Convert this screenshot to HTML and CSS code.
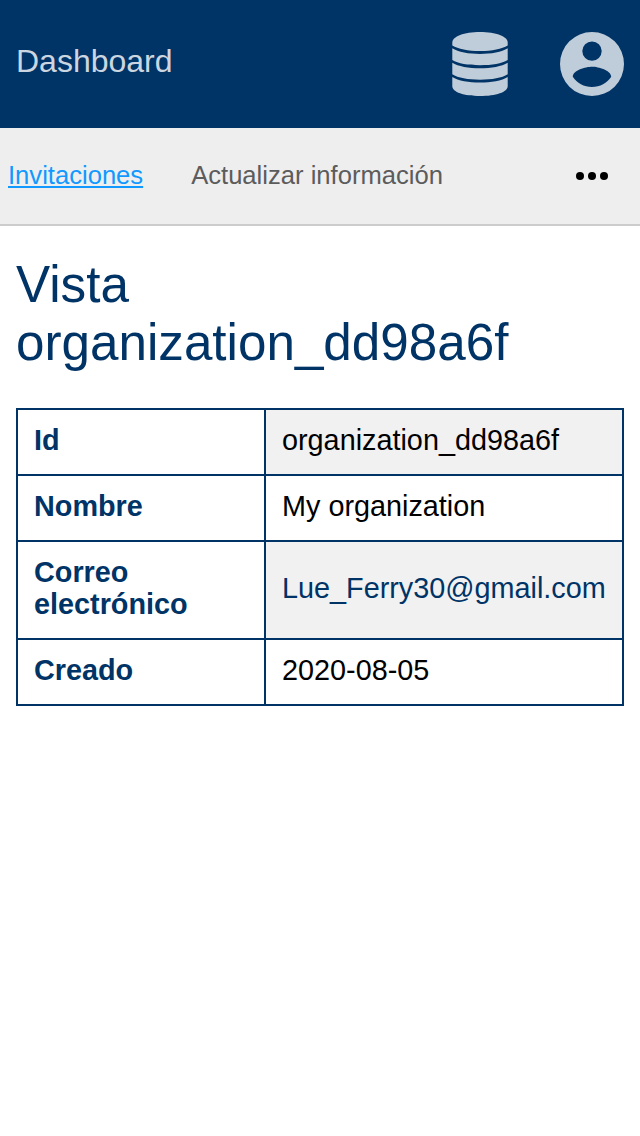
FILE: index.html
```html
<!DOCTYPE html>
<html lang="es">
<head>
<meta charset="utf-8">
<title>Dashboard</title>
<link rel="stylesheet" href="styles.css">
</head>
<body>
<header class="header">
  <span class="brand">Dashboard</span>
  <div class="actions">
    <svg class="icon-db" viewBox="0 0 56 64" width="56" height="64">
      <path d="M.3 10.500C.3 4.500 12 0 28 0s27.700 4.500 27.700 10.500v3C50 17 40 19 28 19S6 17 .3 13.500z"/>
      <path d="M.3 16.300C6 20 17 22 28 22s22-2 27.700-5.700V28C50 31.500 40 33.200 28 33.200S6 31.500 .3 28z"/>
      <path d="M.3 30.700C6 34.300 17 36.300 28 36.300s22-2 27.700-5.600v11.600C50 46 40 47.700 28 47.700S6 46 .3 42.300z"/>
      <path d="M.3 45C6 48.700 17 50.600 28 50.600s22-1.900 27.700-5.600v9.200C55.700 60 44 64 28 64S.3 60 .3 54.200z"/>
    </svg>
    <svg class="icon-user" viewBox="0 0 64 64" width="64" height="64">
      <path fill-rule="evenodd" d="M32 0a32 32 0 1 0 0 64a32 32 0 0 0 0-64zM32 9.400a9.700 9.700 0 1 1 0 19.400a9.700 9.700 0 0 1 0-19.400zM32 55c-8 0-15.100-4.100-19.200-10.300C12.900 38.300 25.600 34.800 32 34.800s19.100 3.500 19.200 9.900C47.100 50.900 40 55 32 55z"/>
    </svg>
  </div>
</header>
<nav class="nav">
  <a class="tab active">Invitaciones</a>
  <a class="tab">Actualizar información</a>
  <svg class="more" viewBox="0 0 32 8" width="32" height="8"><circle cx="4" cy="4" r="4"/><circle cx="16" cy="4" r="4"/><circle cx="28" cy="4" r="4"/></svg>
</nav>
<main class="main">
  <h1 class="title">Vista organization_dd98a6f</h1>
  <table class="details">
    <tr><th>Id</th><td>organization_dd98a6f</td></tr>
    <tr><th>Nombre</th><td>My organization</td></tr>
    <tr><th>Correo electrónico</th><td><a class="mail">Lue_Ferry30@gmail.com</a></td></tr>
    <tr><th>Creado</th><td>2020-08-05</td></tr>
  </table>
</main>
</body>
</html>
```
FILE: styles.css
```css
* { box-sizing: border-box; }
body { margin: 0; background: #fff; font-family: "Liberation Sans", Arial, sans-serif; }
.header { height: 128px; padding: 0 16px; display: flex; align-items: center; justify-content: space-between; background: #003366; color: #bfccd9; }
.brand { font-size: 32px; line-height: 40px; padding-bottom: 6px; color: #ccd6e0; }
.actions { display: flex; gap: 52px; fill: currentColor; }
.actions svg { display: block; }
.nav { height: 98px; padding: 0 32px 2px 8px; display: flex; align-items: center; gap: 48px; background: #eee; border-bottom: 2px solid #ccc; }
.tab { font-size: 25.6px; line-height: 32px; color: #5c5c5c; }
.active { color: #1199ff; text-decoration: underline; text-decoration-thickness: 2px; text-underline-offset: 2px; text-decoration-skip-ink: none; }
.more { margin-left: auto; margin-top: 2px; }
.main { padding: 30px 16px; }
.title { margin: 0 0 36px; font-size: 51.2px; line-height: 58px; font-weight: 400; color: #003366; }
.details { width: 608px; border-collapse: collapse; font-size: 28.8px; line-height: 32px; }
.details th, .details td { border: 2px solid #003366; padding: 14px 16px 18px; text-align: left; vertical-align: middle; }
.details th { width: 248px; color: #003366; }
.details tr:nth-child(odd) td { background: #f1f1f1; }
.mail { color: #003366; }
```
